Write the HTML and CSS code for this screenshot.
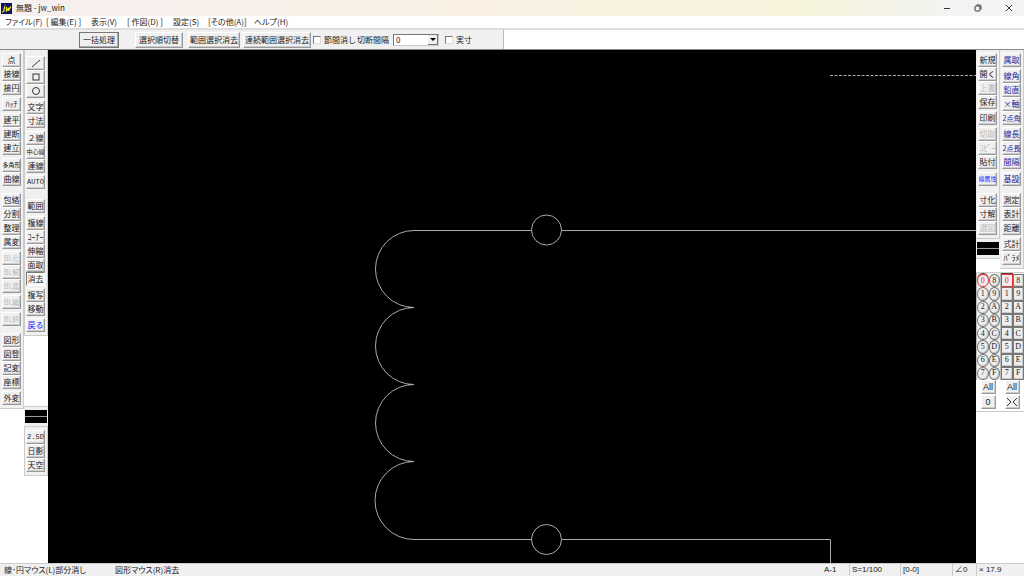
FILE: index.html
```html
<!DOCTYPE html>
<html lang="ja">
<head>
<meta charset="utf-8">
<title>無題 - jw_win</title>
<link rel="stylesheet" href="styles.css">
</head>
<body>
<header class="titlebar">
  <svg class="logo" viewBox="0 0 11 11" aria-hidden="true"><rect width="11" height="11" fill="#101060"/><path d="M3.6 3.5 2.8 8.2 1 9.3M4 1.8v.6M5.5 3.8v4l2-2.2v2.2l2.3-4.3" fill="none" stroke="#f0f020" stroke-width="1.3"/></svg>
  <h1 class="title">無題 - jw_win</h1>
  <div class="window-controls">
    <button aria-label="最小化"><svg viewBox="0 0 8 8"><path d="M1 4.5h6"/></svg></button>
    <button aria-label="元に戻す"><svg viewBox="0 0 8 8"><rect x="1" y="2" width="5" height="5" rx="1"/><path d="M2.5 1h3.2Q7 1 7 2.4v3"/></svg></button>
    <button aria-label="閉じる"><svg viewBox="0 0 8 8"><path d="m1 1 6 6m0-6L1 7"/></svg></button>
  </div>
</header>
<nav class="menubar">
  <button>ファイル(F)</button><button>[ 編集(E) ]</button><button>表示(V)</button><button>[ 作図(D) ]</button><button>設定(S)</button><button>[その他(A)]</button><button>ヘルプ(H)</button>
</nav>
<div class="controlbar">
  <div class="controls">
    <button class="btn command framed">一括処理</button>
    <button class="btn command order">選択順切替</button>
    <button class="btn command range">範囲選択消去</button>
    <button class="btn command">連続範囲選択消去</button>
    <label class="check"><input type="checkbox">節間消し</label>
    <label class="spacing" for="spacing">切断間隔</label>
    <div class="combo"><select id="spacing"><option>0</option></select><span class="combo-arrow"></span></div>
    <label class="check"><input type="checkbox">実寸</label>
  </div>
</div>
<main class="workspace">
  <aside class="dock">
    <div class="panel">
      <div class="group"><button class="btn">点</button><button class="btn">接線</button><button class="btn">接円</button></div>
      <div class="group"><button class="btn">ﾊｯﾁ</button></div>
      <div class="group wide"><button class="btn">建平</button><button class="btn">建断</button><button class="btn">建立</button></div>
      <div class="group section"><button class="btn tight">多角形</button><button class="btn">曲線</button></div>
      <div class="group"><button class="btn">包絡</button><button class="btn">分割</button><button class="btn">整理</button><button class="btn">属変</button></div>
      <div class="group"><button class="btn block" disabled>BL化</button><button class="btn block" disabled>BL解</button><button class="btn block" disabled>BL属</button></div>
      <div class="group wide"><button class="btn block" disabled>BL編</button></div>
      <div class="group section"><button class="btn block" disabled>BL終</button></div>
      <div class="group"><button class="btn">図形</button><button class="btn">図登</button><button class="btn">記変</button><button class="btn">座標</button></div>
      <div class="group"><button class="btn">外変</button></div>
    </div>
  </aside>
  <aside class="dock second">
    <div class="panel lowered">
      <div class="group">
        <button class="btn" aria-label="線"><svg viewBox="0 0 10 10"><path d="m1 9 8-7"/></svg></button>
        <button class="btn" aria-label="矩形"><svg viewBox="0 0 10 10"><rect x="2" y="2" width="6" height="6"/></svg></button>
        <button class="btn" aria-label="円"><svg viewBox="0 0 10 10"><circle cx="5" cy="5" r="3.5"/></svg></button>
      </div>
      <div class="group wide"><button class="btn">文字</button><button class="btn">寸法</button></div>
      <div class="group"><button class="btn">２線</button><button class="btn tight">中心線</button><button class="btn">連線</button></div>
      <div class="group break"><button class="btn mono">AUTO</button></div>
      <div class="group wide"><button class="btn">範囲</button></div>
      <div class="group"><button class="btn">複線</button><button class="btn">ｺｰﾅｰ</button><button class="btn">伸縮</button><button class="btn">面取</button><button class="btn pressed" aria-pressed="true">消去</button></div>
      <div class="group"><button class="btn">複写</button><button class="btn">移動</button></div>
      <div class="group"><button class="btn undo">戻る</button></div>
    </div>
    <div class="void tall"></div>
    <div class="swatch-row"><button class="swatch" aria-label="線属性"></button></div>
    <div class="panel"><div class="group"><button class="btn mono">2.5D</button><button class="btn">日影</button><button class="btn">天空</button></div></div>
  </aside>
  <svg class="drawing" viewBox="0 0 928 513" preserveAspectRatio="xMinYMin slice" role="img" aria-label="図面">
    <path d="M782 25.5H928" stroke-dasharray="3 1.5"/>
    <path d="M484 180.500H366A38.500 38.500 0 0 0 366 257.500A38.500 38.500 0 0 0 366 334.500A38.500 38.500 0 0 0 366 411.500A39 39 0 0 0 366 489.500H484M360 257.500h6M360 334.500h6M360 411.500h6"/>
    <path d="M514 180.500H928M514 489.500H782.500V513"/>
    <circle cx="498.500" cy="180" r="15"/><circle cx="498.500" cy="489.500" r="15"/>
  </svg>
  <aside class="dock">
    <div class="panel">
      <div class="group"><button class="btn">新規</button><button class="btn">開く</button><button class="btn" disabled>上書</button><button class="btn">保存</button></div>
      <div class="group"><button class="btn">印刷</button></div>
      <div class="group wide"><button class="btn" disabled>切取</button><button class="btn" disabled>ｺﾋﾟｰ</button><button class="btn">貼付</button></div>
      <div class="group section"><button class="btn undo tight">線属性</button></div>
      <div class="group"><button class="btn">寸化</button><button class="btn">寸解</button><button class="btn" disabled>選図</button></div>
    </div>
    <div class="swatch-row"><button class="swatch" aria-label="線色と線種"></button></div>
    <div class="void"></div>
    <div class="layers round">
      <button class="current">0</button><button>8</button><button>1</button><button>9</button><button>2</button><button>A</button><button>3</button><button>B</button><button>4</button><button>C</button><button>5</button><button>D</button><button>6</button><button>E</button><button>7</button><button>F</button>
    </div>
    <div class="layer-actions"><button class="btn">All</button><button class="btn">0</button></div>
  </aside>
  <aside class="dock">
    <div class="panel blue">
      <div class="group"><button class="btn">属取</button></div>
      <div class="group"><button class="btn">線角</button><button class="btn">鉛直</button><button class="btn">×軸</button><button class="btn block">2点角</button></div>
      <div class="group wide"><button class="btn">線長</button><button class="btn block">2点長</button><button class="btn">間隔</button></div>
      <div class="group section"><button class="btn">基設</button></div>
      <div class="group dark"><button class="btn">測定</button><button class="btn">表計</button><button class="btn">距離</button></div>
      <div class="group dark"><button class="btn">式計</button><button class="btn">ﾊﾟﾗﾒ</button></div>
    </div>
    <div class="void short"></div>
    <div class="layers">
      <button class="current">0</button><button>8</button><button>1</button><button>9</button><button>2</button><button>A</button><button>3</button><button>B</button><button>4</button><button>C</button><button>5</button><button>D</button><button>6</button><button>E</button><button>7</button><button>F</button>
    </div>
    <div class="layer-actions"><button class="btn">All</button><button class="btn" aria-label="全解除"><svg viewBox="0 0 10 10"><path d="m0 1 4 4-4 4M10 1 6 5l4 4"/></svg></button></div>
  </aside>
</main>
<footer class="statusbar">
  <span class="hint">線･円マウス(L)部分消し</span><span class="hint second-hint">図形マウス(R)消去</span>
  <button class="paper">A-1</button><button class="scale">S=1/100</button><button class="layer">[0-0]</button><button class="angle">∠0</button><button class="zoom">× 17.9</button>
</footer>
</body>
</html>
```
FILE: styles.css
```css
* { box-sizing: border-box; }

body {
  margin: 0;
  height: 100vh;
  display: flex;
  flex-direction: column;
  overflow: hidden;
  background: #fff;
  color: #222;
  font: 8px/12px "Noto Sans CJK JP", sans-serif;
}

button, input, select {
  margin: 0;
  padding: 0;
  border: 0;
  background: none;
  color: inherit;
  font: inherit;
  white-space: nowrap;
}

svg { fill: none; stroke: #333; stroke-width: 1; }

.titlebar {
  flex: none;
  height: 16px;
  display: flex;
  align-items: center;
  gap: 4px;
  padding-left: 1px;
  background: linear-gradient(90deg, #f5f0f0, #f9f0ea 25%, #f9f1e1 53%, #f6f3dc 80%, #f3f3f1 92%);
}
.logo { width: 11px; height: 11px; stroke: none; }
.title { margin: 0; font-size: 8px; font-weight: 400; }
.window-controls { margin-left: auto; display: flex; }
.window-controls button { width: 31px; height: 16px; display: grid; place-items: center; }
.window-controls svg { width: 8px; height: 8px; }

.menubar {
  flex: none;
  height: 12px;
  display: grid;
  grid-template-columns: 41px 45px 36px 46px 35px 46px 40px;
  padding-left: 5px;
  font-feature-settings: "palt";
}
.menubar button { text-align: left; }

.controlbar {
  flex: none;
  height: 22px;
  display: flex;
  border-top: 2px solid #ddd;
  border-bottom: 1px solid #888;
}
.controls {
  display: flex;
  align-items: center;
  padding: 0 31px 0 79px;
  background: #f0f0f0;
  border-right: 1px solid #bbb;
}

.btn {
  height: 14px;
  display: grid;
  place-items: center;
  place-content: center;
  background: #f0f0f0;
  border: 1px solid #fff;
  border-right-color: #999;
  border-bottom-color: #999;
  box-shadow: inset -1px -1px #ccc;
}
.btn:disabled { color: #bbb; }
.btn svg { width: 10px; height: 10px; }

.command { height: 16px; padding: 0 1px; }
.framed { padding: 0 3px; border-color: #777; box-shadow: inset -1px -1px #aaa; margin-right: 16px; }
.order { padding: 0 3px; margin-right: 5px; }
.range { margin-right: 3px; }

.check { display: flex; align-items: center; gap: 3px; margin-left: 2px; }
.check input {
  appearance: none;
  width: 8px;
  height: 8px;
  background: #fff;
  border: 1px solid #777;
  border-right-color: #ddd;
  border-bottom-color: #ddd;
}
.spacing { margin: 0 4px 0 1px; }
.combo { position: relative; width: 46px; height: 12px; margin-right: 4px; }
.combo select {
  appearance: none;
  width: 100%;
  height: 100%;
  padding-left: 2px;
  background: #fff;
  border: 1px solid #777;
  border-right-color: #ccc;
  border-bottom-color: #ccc;
  line-height: 10px;
}
.combo-arrow {
  position: absolute;
  inset: 1px 1px 1px auto;
  width: 10px;
  display: grid;
  place-items: center;
  background: #f0f0f0;
  border-right: 1px solid #777;
  border-bottom: 1px solid #777;
  pointer-events: none;
}
.combo-arrow::before {
  content: "";
  border: 3px solid transparent;
  border-top-color: #000;
  border-bottom: 0;
}

.workspace {
  flex: 1;
  min-height: 0;
  display: grid;
  grid-template-columns: 24px 24px minmax(0, 1fr) 24px 24px;
}
.dock { display: flex; flex-direction: column; min-width: 0; }
.panel {
  padding: 3px 2px;
  background: #f0f0f0;
  border-right: 1px solid #ccc;
  border-bottom: 1px solid #ccc;
}
.lowered { padding-top: 6px; }
.second .panel { border-left: 1px solid #ccc; padding-left: 1px; }
.group { display: flex; flex-direction: column; margin-bottom: 2px; }
.group:last-child { margin-bottom: 0; }
.wide { margin-bottom: 3px; }
.section { margin-bottom: 7px; }
.break { margin-bottom: 10px; }
.tight { font-size: 6px; font-feature-settings: "palt"; }
.block { font-size: 7px; font-feature-settings: "palt"; }
.mono { font: 7px/12px "Liberation Mono", monospace; }
.pressed { background: #fafafa; border-color: #777 #fff #fff #777; box-shadow: none; }
.undo { color: #22f; }
.blue { color: #229; }
.dark { color: #222; }

.void { height: 14px; border-bottom: 1px solid #ccc; }
.tall { height: 71px; }
.short { height: 4px; }
.swatch-row { padding: 3px 1px; background: #f0f0f0; border-bottom: 1px solid #ccc; }
.swatch {
  display: block;
  width: 100%;
  height: 13px;
  background: linear-gradient(#000 6px, #999 6px, #999 7px, #000 7px);
}

.drawing { width: 100%; height: 100%; background: #000; stroke: #aaa; }

.layers {
  flex: none;
  height: 107px;
  display: grid;
  grid-template-columns: 1fr 1fr;
  grid-template-rows: repeat(8, minmax(0, 1fr));
  padding-top: 1px;
  background: #eee;
  border-left: 1px solid #bbb;
  font: 8px/10px "Liberation Serif", serif;
}
.layers button { border: 1px solid #777; box-shadow: inset -1px -1px #ccc; }
.round button { border-radius: 50%; }
.layers .current { color: #e22; border-color: #e33; box-shadow: 0 -1px #633; }
.layer-actions {
  display: flex;
  flex-direction: column;
  align-items: center;
  gap: 1px;
  padding-bottom: 2px;
  border-bottom: 1px solid #ccc;
  font: 9px/12px "Liberation Sans", sans-serif;
}
.layer-actions .btn { width: 15px; }

.statusbar {
  flex: none;
  height: 13px;
  display: flex;
  padding-left: 4px;
  background: #f0f0f0;
  border-top: 1px solid #ccc;
}
.hint { font-feature-settings: "palt"; }
.second-hint { margin-left: 29px; }
.statusbar button {
  padding-left: 2px;
  border-right: 1px solid #ccc;
  text-align: left;
  font-family: "Liberation Sans", "Noto Sans CJK JP", sans-serif;
}
.statusbar .paper { width: 28px; margin-left: auto; }
.statusbar .scale { width: 51px; }
.statusbar .layer { width: 52px; }
.statusbar .angle { width: 24px; }
.statusbar .zoom { width: 47px; border: 0; }
```
